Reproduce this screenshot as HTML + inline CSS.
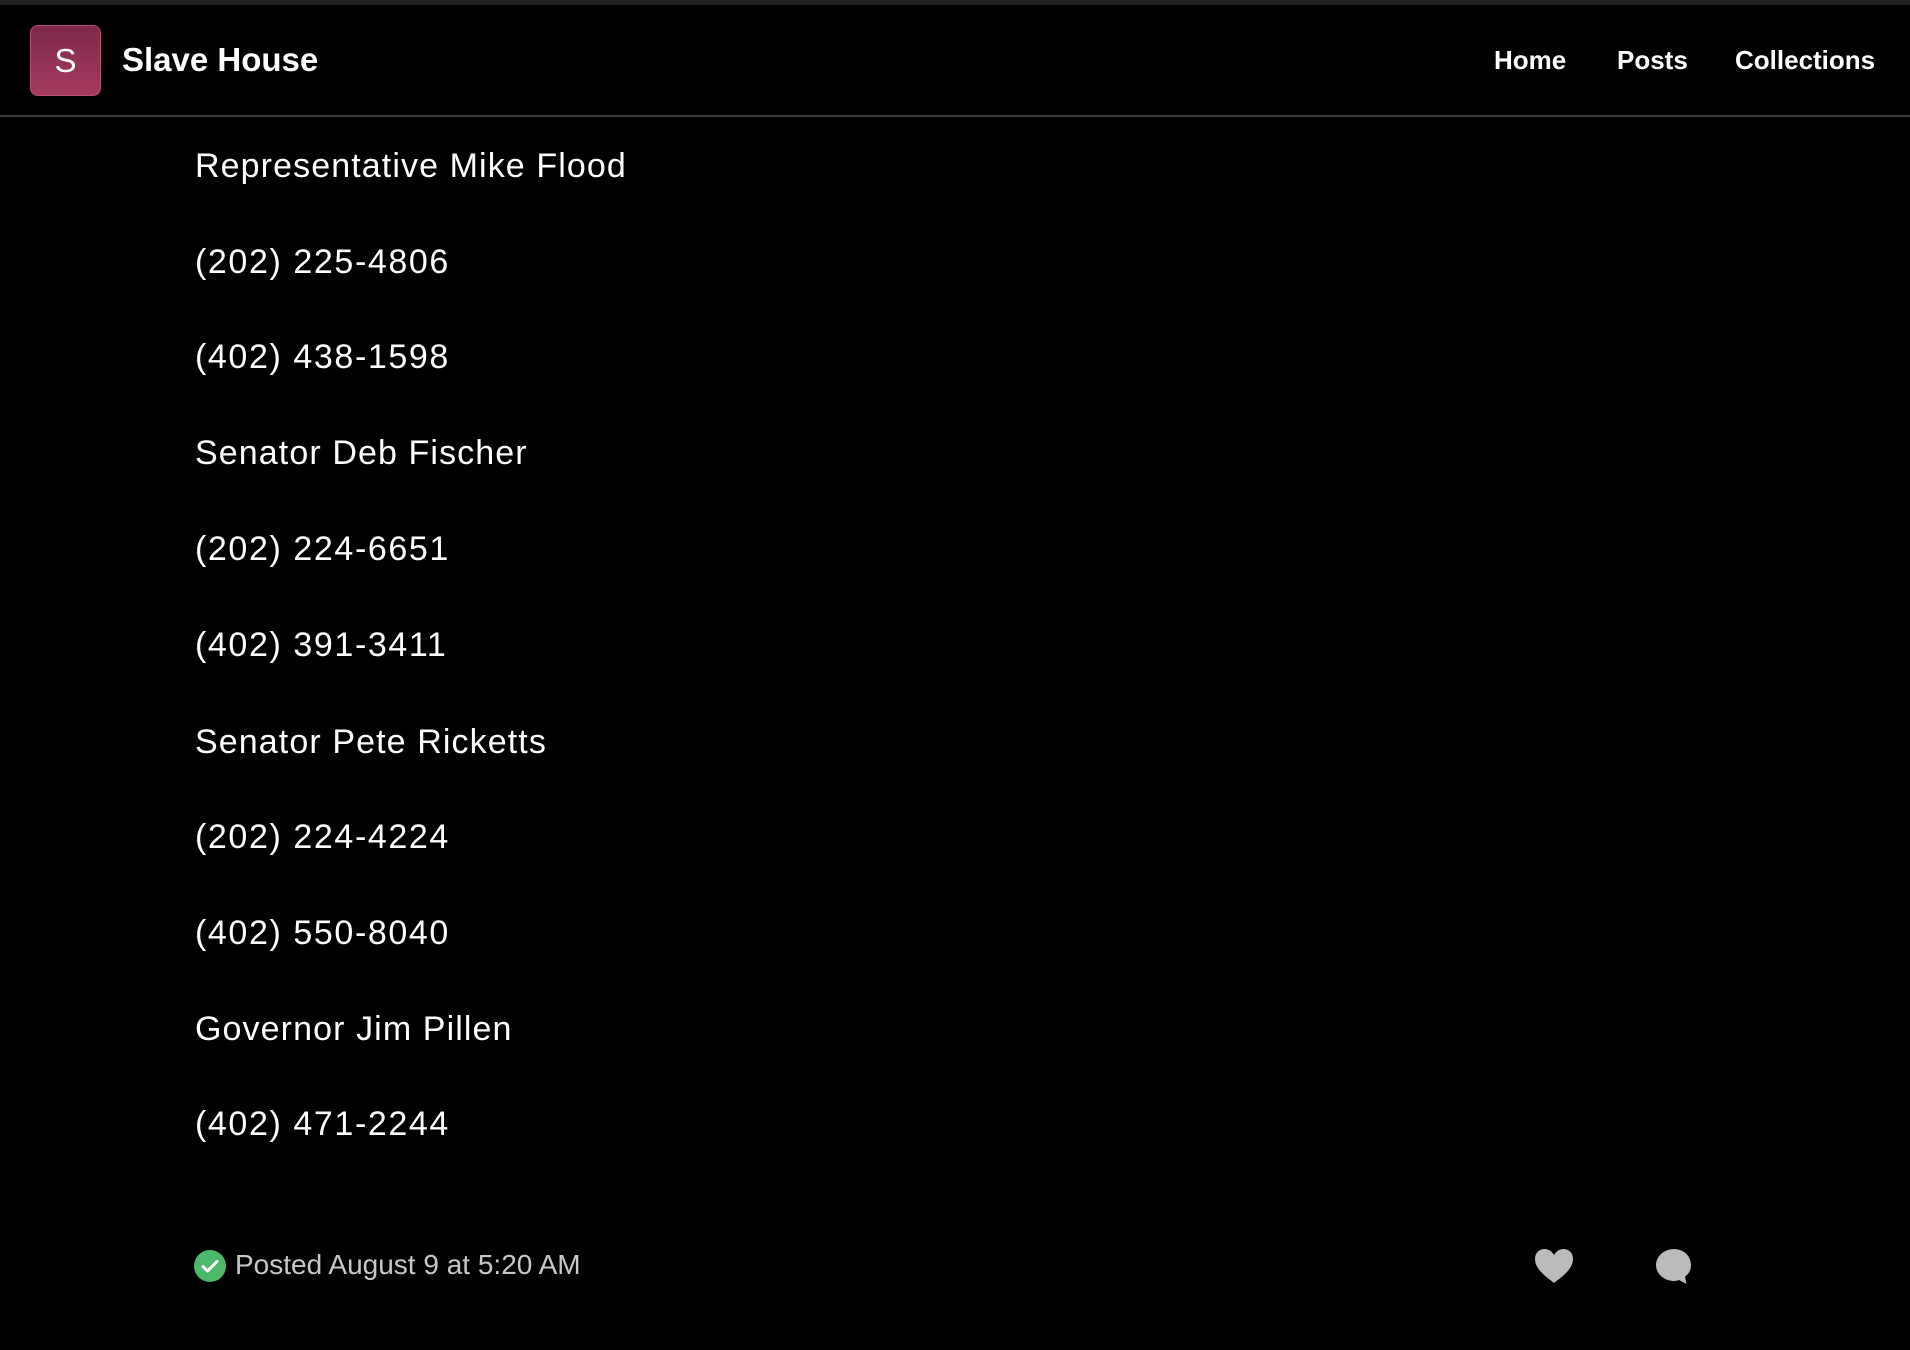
<!DOCTYPE html>
<html><head><meta charset="utf-8"><style>
html,body{margin:0;padding:0;background:#000;width:1910px;height:1350px;overflow:hidden;font-family:"Liberation Sans",sans-serif;color:#fff}
.topbar{position:absolute;left:0;top:0;width:1910px;height:5px;background:#222}
.hdr{position:absolute;left:0;top:5px;width:1910px;height:110px;border-bottom:2px solid #3a3a3a}
.logo{position:absolute;left:30px;top:20px;width:71px;height:71px;border-radius:8px;background:linear-gradient(#7e2a4a,#a43a60);border:1px solid #b4506f;box-sizing:border-box;color:#fff;font-size:33px;text-align:center;line-height:69px}
.title{position:absolute;left:122px;top:36px;font-size:33px;font-weight:bold;letter-spacing:0px}
.nav{position:absolute;top:40px;font-size:26px;font-weight:bold}
.line{position:absolute;left:195px;font-size:34px;letter-spacing:1.1px;line-height:40px}
.ph{letter-spacing:1.6px}
.foot{position:absolute;left:235px;top:1249px;font-size:28px;color:#c8c8c8}
</style></head><body>
<div class="topbar"></div>
<div class="hdr">
<div class="logo">S</div>
<div class="title">Slave House</div>
<div class="nav" style="left:1494px">Home</div>
<div class="nav" style="left:1617px">Posts</div>
<div class="nav" style="left:1735px">Collections</div>
</div>
<div class="line" style="top:146px">Representative Mike Flood</div>
<div class="line ph" style="top:242px">(202) 225-4806</div>
<div class="line ph" style="top:337px">(402) 438-1598</div>
<div class="line" style="top:433px">Senator Deb Fischer</div>
<div class="line ph" style="top:529px">(202) 224-6651</div>
<div class="line ph" style="top:625px">(402) 391-3411</div>
<div class="line" style="top:722px">Senator Pete Ricketts</div>
<div class="line ph" style="top:817px">(202) 224-4224</div>
<div class="line ph" style="top:913px">(402) 550-8040</div>
<div class="line" style="top:1009px">Governor Jim Pillen</div>
<div class="line ph" style="top:1104px">(402) 471-2244</div>
<svg style="position:absolute;left:194px;top:1250px" width="32" height="32" viewBox="0 0 32 32"><circle cx="16" cy="16" r="16" fill="#4cb86a"/><path d="M9 16.5l4.5 4.5L23 11.5" stroke="#fff" stroke-width="3" fill="none" stroke-linecap="round" stroke-linejoin="round"/></svg>
<div class="foot">Posted August 9 at 5:20 AM</div>
<svg style="position:absolute;left:1534px;top:1248px" width="40" height="36" viewBox="0 0 40 36"><path d="M20 35C14 30 1 22 1 11C1 5 5 1 10.5 1C15 1 18 3.5 20 7C22 3.5 25 1 29.5 1C35 1 39 5 39 11C39 22 26 30 20 35Z" fill="#bbb"/></svg>
<svg style="position:absolute;left:1655px;top:1248px" width="38" height="38" viewBox="0 0 38 38"><path d="M19 1C28.5 1 36 8 36 17C36 22 34 26 30 28.5L31.5 36L24 32C22.5 32.5 21 33 19 33C9.5 33 1 26 1 17C1 8 9.5 1 19 1Z" fill="#bbb"/></svg>
</body></html>
